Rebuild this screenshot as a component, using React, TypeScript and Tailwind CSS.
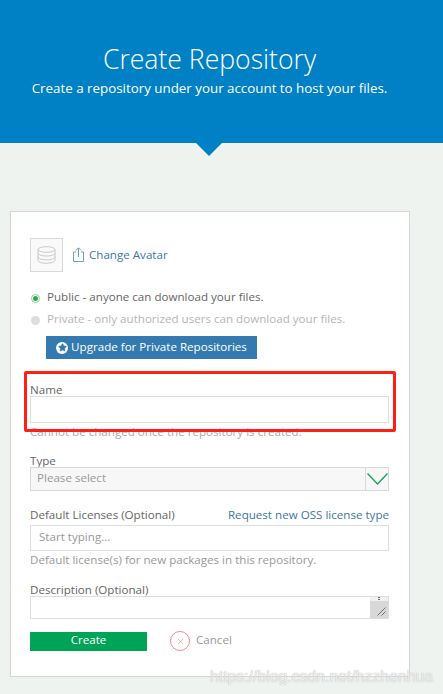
import React from 'react';
import { Star, X } from 'lucide-react';

const font = { fontFamily: '"Open Sans", sans-serif' };

function FieldLabel({ text, className = '' }: { text: string; className?: string }) {
  return <div className={`-translate-y-px text-[11.6px] leading-[16px] text-[#666] ${className}`}>{text}</div>;
}

export default function App() {
  return (
    <div className="relative h-[694px] w-[443px] overflow-hidden bg-[#eff3f0]" style={font}>
      <header className="relative flex h-[143px] flex-col items-center bg-[#0081c6] pr-[24px] pt-[40px] text-white">
        <h1 className="text-[26.6px] font-light leading-[38px]">Create Repository</h1>
        <p className="mt-[1px] text-[13.35px] font-medium leading-[18px]">
          Create a repository under your account to host your files.
        </p>
        <div className="absolute left-[196px] top-[143px] h-0 w-0 border-x-[13.5px] border-t-[13px] border-x-transparent border-t-[#0081c6]" />
      </header>

      <main className="mx-[10px] mt-[68px] h-[466px] w-[400px] border border-[#d6d6d6] bg-white pl-[19px] pr-[20px] pt-[26px]">
        <div className="flex items-center">
          <div className="flex h-[34px] w-[33px] items-center justify-center border border-[#d9d9d9] bg-[#f9f9f9]">
            <svg width="19" height="18" viewBox="0 0 19 18" fill="none" stroke="#c8c8c8" strokeWidth="1">
              <ellipse cx="9.5" cy="3.5" rx="8.5" ry="2.8" />
              <path d="M1 3.5 V14.5 C1 16 5 17.3 9.5 17.3 C14 17.3 18 16 18 14.5 V3.5" />
              <path d="M1 7.2 C1 8.8 5 10 9.5 10 C14 10 18 8.8 18 7.2" />
              <path d="M1 11 C1 12.6 5 13.8 9.5 13.8 C14 13.8 18 12.6 18 11" />
            </svg>
          </div>
          <a className="ml-[10px] flex items-center text-[11.6px] text-[#3c76a8]">
            <svg width="11" height="15" viewBox="0 0 11 15" fill="none" stroke="#6ba0c8" strokeWidth="1">
              <path d="M3 5 H0.5 V14.5 H10.5 V5 H8" />
              <path d="M5.5 10 V1 M3 3.3 L5.5 0.8 L8 3.3" />
            </svg>
            <span className="ml-[5px]">Change Avatar</span>
          </a>
        </div>

        <div className="mt-[16px] flex h-[20px] items-center text-[11.6px] text-[#666]">
          <span className="ml-[1px] flex h-[9px] w-[9px] items-center justify-center rounded-full border border-[#8fd0a0]">
            <span className="h-[5px] w-[5px] rounded-full bg-[#2fa84f]" />
          </span>
          <span className="ml-[7px] -translate-y-px">Public - anyone can download your files.</span>
        </div>
        <div className="mt-[2px] flex h-[20px] items-center text-[11.6px] text-[#b5b5b5]">
          <span className="ml-[1px] h-[9px] w-[9px] rounded-full bg-[#dedede]" />
          <span className="ml-[7px] -translate-y-px">Private - only authorized users can download your files.</span>
        </div>
        <button className="ml-[16px] mt-[6px] flex h-[23px] w-[211px] items-center justify-center bg-[#337ab0] text-[11.6px] text-white">
          <span className="flex h-[12px] w-[12px] items-center justify-center rounded-full bg-white">
            <Star className="h-[9px] w-[9px] fill-[#337ab0] text-[#337ab0]" />
          </span>
          <span className="ml-[3px] -translate-y-px">Upgrade for Private Repositories</span>
        </button>

        <FieldLabel text="Name" className="mt-[24px]" />
        <div className="relative -mt-[3px] h-[27px] border border-[#dedede] bg-white" />
        <p className="mt-[2px] -translate-y-px text-[11.6px] leading-[16px] text-[#aaa]">Cannot be changed once the repository is created.</p>

        <FieldLabel text="Type" className="mt-[13px]" />
        <div className="relative -mt-[3px] flex h-[24px] items-center border border-[#d9d9d9] bg-[#f7f7f7]">
          <span className="flex-1 -translate-y-px pl-[6px] text-[11.6px] text-[#999]">Please select</span>
          <span className="flex h-full w-[23px] items-center justify-center border-l border-[#d9d9d9]">
            <svg width="21" height="12" viewBox="0 0 21 12" fill="none">
              <path d="M0.5 0.5 L10.5 11 L20.5 0.5" stroke="#1fa35c" strokeWidth="1.4" />
            </svg>
          </span>
        </div>

        <div className="mt-[17px] flex items-center justify-between">
          <FieldLabel text="Default Licenses (Optional)" />
          <a className="-translate-y-px text-[11.6px] leading-[16px] text-[#3c76a8]">Request new OSS license type</a>
        </div>
        <div className="mt-[1px] flex h-[26px] items-center border border-[#dedede] bg-white pl-[8px] text-[11.6px] text-[#999]">
          <span className="-translate-y-px">Start typing...</span>
        </div>
        <p className="mt-[2px] -translate-y-px text-[11.6px] leading-[16px] text-[#999]">Default license(s) for new packages in this repository.</p>

        <FieldLabel text="Description (Optional)" className="mt-[14px]" />
        <div className="relative -mt-[3px] h-[23px] border border-[#dedede] bg-white">
          <div className="absolute bottom-0 right-0 flex h-[18px] w-[18px] items-end justify-end bg-[#d8d8d8] p-[2px]">
            <svg width="9" height="9" viewBox="0 0 9 9" fill="none">
              <path d="M0.5 8.5 L8.5 0.5 M4.5 8.5 L8.5 4.5" stroke="#555" strokeWidth="0.8" />
            </svg>
          </div>
          <div className="absolute right-0 top-0 flex h-[4px] w-[18px] flex-col items-center gap-[1px] bg-[#f1f1f1]">
            <span className="h-[1px] w-[2px] bg-[#666]" />
            <span className="h-[1px] w-[2px] bg-[#666]" />
          </div>
        </div>

        <div className="mt-[12px] flex items-center">
          <button className="h-[19px] w-[117px] bg-[#00a457] text-[11.6px] text-white">
            <span className="inline-block -translate-y-px">Create</span>
          </button>
          <span className="ml-[23px] flex h-[20px] w-[20px] items-center justify-center rounded-full border border-[#f08a8a]">
            <X className="h-[9px] w-[9px] text-[#e66a6a]" strokeWidth={1.3} />
          </span>
          <span className="ml-[6px] -translate-y-px text-[11.6px] text-[#999]">Cancel</span>
        </div>
      </main>

      <div className="pointer-events-none absolute left-[24px] top-[371px] h-[61px] w-[372px] rounded-[2px] border-[3px] border-[#ff1f17]" />
      <div className="pointer-events-none absolute left-[210px] top-[667px] text-[15.8px] leading-[20px] text-white/80 [font-family:'Liberation_Sans',sans-serif] [text-shadow:0_0_1px_#999]">
        https://blog.csdn.net/hzzhenhua
      </div>
    </div>
  );
}
